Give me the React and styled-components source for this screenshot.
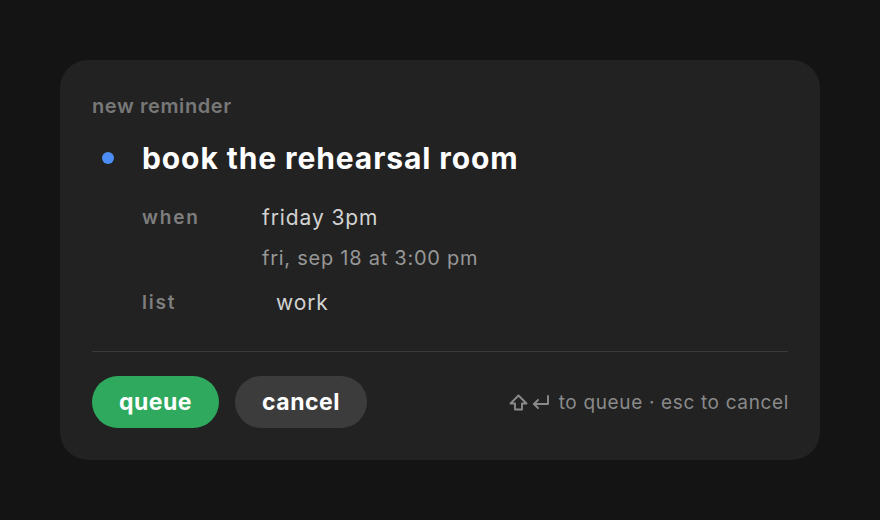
import styled, { createGlobalStyle } from 'styled-components'

const GlobalStyle = createGlobalStyle`
  html, body {
    margin: 0;
    padding: 0;
    background: #141414;
  }
  body {
    font-family: Inter, "Noto Sans", sans-serif;
    -webkit-font-smoothing: antialiased;
  }
`

const Page = styled.div`
  min-height: 520px;
  display: flex;
  align-items: center;
  justify-content: center;
`

const Card = styled.div`
  width: 760px;
  height: 400px;
  box-sizing: border-box;
  background: #222222;
  border-radius: 28px;
  padding: 34px 32px 0;
  display: flex;
  flex-direction: column;
`

const Eyebrow = styled.div`
  font-size: 20px;
  font-weight: 600;
  color: #787878;
  line-height: 24px;
  letter-spacing: 0.6px;
`

const TitleRow = styled.div`
  display: flex;
  align-items: center;
  gap: 28px;
  margin-top: 22px;
  padding-left: 10px;
`

const Dot = styled.span`
  width: 12px;
  height: 12px;
  border-radius: 50%;
  background: ${({ color }) => color};
  flex: none;
`

const Title = styled.h1`
  margin: 0;
  font-size: 30px;
  font-weight: 700;
  color: #ffffff;
  line-height: 36px;
  letter-spacing: 0.9px;
`

const Fields = styled.div`
  display: grid;
  grid-template-columns: 120px 1fr;
  margin-top: 28px;
  padding-left: 50px;
`

const Label = styled.div`
  font-size: 19px;
  font-weight: 600;
  color: #7e7e7e;
  letter-spacing: 1.8px;
  line-height: 28px;
`

const Value = styled.div`
  font-size: 21px;
  color: #d2d2d2;
  line-height: 28px;
  letter-spacing: 0.9px;
  padding-left: ${({ $indent }) => $indent || 0}px;
`

const Sub = styled.div`
  grid-column: 2;
  font-size: 20px;
  color: #979797;
  line-height: 24px;
  letter-spacing: 0.75px;
  margin: 14px 0 19px;
`

const Divider = styled.hr`
  border: none;
  height: 1px;
  background: #3a3a3a;
  margin: 34px 0 24px;
`

const Footer = styled.div`
  display: flex;
  align-items: center;
  gap: 16px;
`

const Button = styled.button`
  height: 52px;
  padding: 0 27px;
  border: none;
  border-radius: 26px;
  font-family: inherit;
  font-size: 23px;
  font-weight: 700;
  letter-spacing: 0.5px;
  color: #ffffff;
  background: ${({ $primary }) => ($primary ? '#2ea95e' : '#3c3c3c')};
`

const Hint = styled.div`
  margin-left: auto;
  display: flex;
  align-items: center;
  gap: 3px;
  font-size: 19px;
  letter-spacing: 0.65px;
  color: #8a8a8a;

  svg {
    flex: none;
  }

  span {
    margin-left: 6px;
    margin-right: -1px;
  }
`

const ShiftIcon = () => (
  <svg width="19" height="17" viewBox="0 0 19 17" fill="none" stroke="currentColor" strokeWidth="1.9" strokeLinejoin="round">
    <path d="M9.5 1.5 L17.5 9.5 H13 V15.5 H6 V9.5 H1.5 Z" />
  </svg>
)

const ReturnIcon = () => (
  <svg width="19" height="17" viewBox="0 0 19 17" fill="none" stroke="currentColor" strokeWidth="1.9" strokeLinecap="round" strokeLinejoin="round">
    <path d="M17 2 V10 H3" />
    <path d="M7 6 L3 10 L7 14" />
  </svg>
)

export default function App() {
  return (
    <Page>
      <GlobalStyle />
      <Card>
        <Eyebrow>new reminder</Eyebrow>
        <TitleRow>
          <Dot color="#4b8cf5" />
          <Title>book the rehearsal room</Title>
        </TitleRow>

        <Fields>
          <Label>when</Label>
          <Value>friday 3pm</Value>
          <Sub>fri, sep 18 at 3:00 pm</Sub>
          <Label>list</Label>
          <Value $indent={14}>work</Value>
        </Fields>

        <Divider />

        <Footer>
          <Button $primary>queue</Button>
          <Button>cancel</Button>
          <Hint>
            <ShiftIcon />
            <ReturnIcon />
            <span>to queue · esc to cancel</span>
          </Hint>
        </Footer>
      </Card>
    </Page>
  )
}
